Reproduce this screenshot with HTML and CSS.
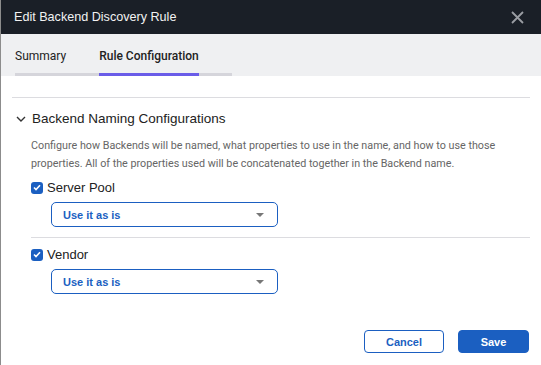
FILE: index.html
```html
<!DOCTYPE html>
<html lang="en">
<head>
  <meta charset="UTF-8">
  <title>Edit Backend Discovery Rule</title>
  <link rel="stylesheet" href="styles.css">
</head>
<body>
  <div class="modal">
    <div class="modal-header">
      <span class="modal-title">Edit Backend Discovery Rule</span>
      <span class="close">
        <svg width="13" height="13" viewBox="0 0 13 13"><path d="M1 1L12 12M12 1L1 12" stroke="#9a9da3" stroke-width="1.8" fill="none"/></svg>
      </span>
    </div>

    <div class="tab-bar">
      <div class="tabs">
        <div class="tab">Summary</div>
        <div class="tab active">Rule Configuration</div>
      </div>
    </div>

    <div class="modal-body">
      <hr class="rule-top">

      <div class="section-head">
        <svg class="chevron" width="10" height="6" viewBox="0 0 10 6"><path d="M1 1L5 5L9 1" stroke="#333" stroke-width="1.4" fill="none"/></svg>
        <span>Backend Naming Configurations</span>
      </div>

      <div class="section">
        <p class="desc">Configure how Backends will be named, what properties to use in the name, and how to use those properties. All of the properties used will be concatenated together in the Backend name.</p>

        <!-- 속성 하나 -->
        <div class="prop">
          <label class="check-row">
            <span class="checkbox"><svg width="8" height="7" viewBox="0 0 8 7"><path d="M1 3.5L3 5.5L7 1.2" stroke="#fff" stroke-width="1.6" fill="none"/></svg></span>
            Server Pool
          </label>
          <div class="select">
            <span>Use it as is</span>
            <span class="caret"></span>
          </div>
        </div>

        <div class="prop divided">
          <label class="check-row">
            <span class="checkbox"><svg width="8" height="7" viewBox="0 0 8 7"><path d="M1 3.5L3 5.5L7 1.2" stroke="#fff" stroke-width="1.6" fill="none"/></svg></span>
            Vendor
          </label>
          <div class="select">
            <span>Use it as is</span>
            <span class="caret"></span>
          </div>
        </div>
      </div>

      <div class="actions">
        <button class="btn btn-outline">Cancel</button>
        <button class="btn btn-primary">Save</button>
      </div>
    </div>
  </div>
</body>
</html>
```

FILE: styles.css
```css
body {
  margin: 0;
  padding: 0;
  font-family: 'Liberation Sans', Arial, sans-serif;
  background: #fff;
}

.modal {
  width: 541px;
  height: 365px;
  border-left: 1px solid #8c8c8c;
  box-sizing: border-box;
  overflow: hidden;
}

.modal-header {
  height: 34px;
  background-color: #1a1f27;
  display: flex;
  align-items: center;
  justify-content: space-between;
  padding: 0 17px 0 13px;
}
.modal-title {
  color: #f2f2f2;
  font-size: 12.6px;
  font-weight: 300;
}
.close {
  display: flex;
}

.tab-bar {
  height: 42px;
  background-color: #eff0f2;
  padding-left: 14px;
  display: flex;
  align-items: flex-end;
}
.tabs {
  display: flex;
  gap: 33px;
  padding-right: 33px;
  border-bottom: 3px solid #d5d5db;
}
.tab {
  font-family: Roboto, 'Liberation Sans', sans-serif;
  font-size: 12px;
  color: #222;
  padding-bottom: 10px;
  margin-bottom: -3px;
  border-bottom: 3px solid transparent;
}
.tab.active {
  border-bottom-color: #6a5ce8;
  font-weight: 500;
}

.modal-body {
  padding: 0 11px 0 11px;
}
.rule-top {
  border: 0;
  border-top: 1px solid #dcdce0;
  margin: 21px 0 0 0;
}

.section-head {
  display: flex;
  align-items: center;
  gap: 6px;
  margin: 13px 0 0 4px;
  font-size: 13.5px;
  color: #222;
}

.section {
  padding-left: 19px;
}
.desc {
  font-family: Roboto, sans-serif;
  font-size: 10.75px;
  line-height: 18px;
  color: #666;
  margin: 11px 0 7px 0;
}

.prop {
  padding-bottom: 10px;
}
.prop.divided {
  border-top: 1px solid #dcdce0;
  padding-top: 9px;
}
.check-row {
  display: flex;
  align-items: center;
  gap: 4px;
  font-size: 13px;
  color: #222;
}
.checkbox {
  width: 12px;
  height: 12px;
  border-radius: 3px;
  background-color: #1b5fc1;
  display: flex;
  align-items: center;
  justify-content: center;
}

.select {
  width: 227px;
  height: 25px;
  box-sizing: border-box;
  margin: 7px 0 0 20px;
  border: 1px solid #1b5fc1;
  border-radius: 5px;
  display: flex;
  align-items: center;
  justify-content: space-between;
  padding: 0 13px 0 11px;
  font-size: 11px;
  font-weight: bold;
  color: #1b5fc1;
}
.caret {
  width: 0;
  height: 0;
  border-left: 4px solid transparent;
  border-right: 4px solid transparent;
  border-top: 4px solid #777;
}

.actions {
  display: flex;
  justify-content: flex-end;
  gap: 14px;
  margin-top: 26px;
  padding-right: 1px;
}
.btn {
  height: 23px;
  border-radius: 4px;
  font-family: 'Liberation Sans', Arial, sans-serif;
  font-size: 11px;
  font-weight: bold;
  cursor: pointer;
}
.btn-outline {
  width: 80px;
  background: #fff;
  border: 1px solid #1b5fc1;
  color: #1b5fc1;
}
.btn-primary {
  width: 71px;
  background: #1b5fc1;
  border: 1px solid #1b5fc1;
  color: #fff;
}
```
